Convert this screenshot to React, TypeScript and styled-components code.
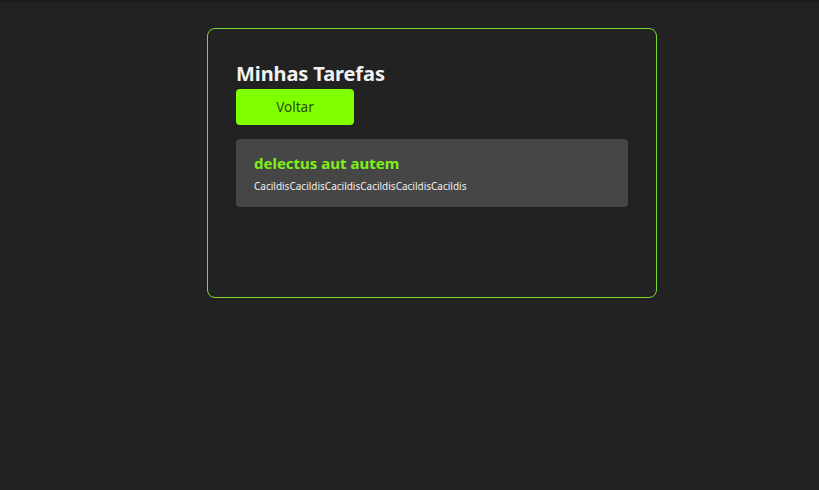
import styled, { createGlobalStyle } from "styled-components"

const GlobalStyle = createGlobalStyle`
    body {
        margin: 0;
        background: #222222;
        font-family: 'Noto Sans', 'Open Sans', sans-serif;
    }
`

const tasks = [
    { title: "delectus aut autem", description: "CacildisCacildisCacildisCacildisCacildisCacildis" },
]

export default function App(){
    return(
        <>
            <GlobalStyle/>
            <Page>
                <Container>
                    <Title>Minhas Tarefas</Title>
                    <BackButton>Voltar</BackButton>
                    <TaskList>
                        {tasks.map((task) => (
                            <TaskCard key={task.title}>
                                <TaskTitle>{task.title}</TaskTitle>
                                <TaskDescription>{task.description}</TaskDescription>
                            </TaskCard>
                        ))}
                    </TaskList>
                </Container>
            </Page>
        </>
    )
}

const Page = styled.main`
    display: flex;
    min-height: 490px;
    padding: 28px 0 0 207px;
    box-sizing: border-box;
    border-top: 2px solid #1b1b1b;
`
const Container = styled.section`
    display: flex;
    flex-direction: column;
    align-items: flex-start;
    width: 450px;
    height: 270px;
    box-sizing: border-box;
    padding: 30px 28px;
    border: 1px solid #7cd62e;
    border-radius: 8px;
    margin-top: -2px;
`
const Title = styled.h1`
    margin: 0;
    color: #f2f2f2;
    font-size: 20px;
    font-weight: 700;
    line-height: 30px;
    letter-spacing: -0.1px;
`
const BackButton = styled.button`
    width: 118px;
    height: 36px;
    border: none;
    border-radius: 4px;
    background: #7fff00;
    color: #2f4a14;
    font-family: 'Noto Sans', sans-serif;
    font-size: 13.5px;
    cursor: pointer;
`
const TaskList = styled.div`
    display: flex;
    flex-direction: column;
    gap: 10px;
    width: 100%;
    margin-top: 14px;
`
const TaskCard = styled.div`
    display: flex;
    flex-direction: column;
    gap: 6px;
    padding: 14px 18px 14px;
    background: #464646;
    border-radius: 4px;
`
const TaskTitle = styled.h2`
    margin: 0;
    color: #7fef1a;
    font-size: 15px;
    font-weight: 700;
    line-height: 20px;
`
const TaskDescription = styled.p`
    margin: 0;
    color: #f0f0f0;
    font-size: 10px;
    line-height: 14px;
`
